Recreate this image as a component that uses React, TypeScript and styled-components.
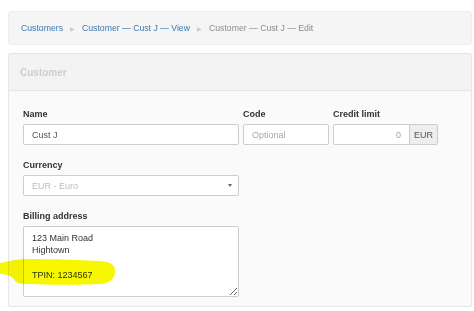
import React from 'react';
import styled, { createGlobalStyle } from 'styled-components';

const GlobalStyle = createGlobalStyle`
  html, body {
    margin: 0;
    padding: 0;
    background: #ffffff;
    font-family: 'Liberation Sans', Arial, sans-serif;
    font-size: 9px;
    color: #333333;
  }
  * {
    box-sizing: border-box;
  }
`;

const Page = styled.div`
  position: relative;
  width: 474px;
  height: 311px;
  padding: 11px 2px 0 8px;
  overflow: hidden;
`;

const Breadcrumb = styled.ol`
  display: flex;
  align-items: center;
  height: 34px;
  margin: 0 0 8px;
  padding: 0 12px;
  list-style: none;
  background: #f5f5f5;
  border: 1px solid #ececec;
  border-radius: 3px;
  font-size: 8.7px;
`;

const Crumb = styled.li<{ $active?: boolean }>`
  color: ${(p) => (p.$active ? '#8c8c8c' : '#3d78b0')};
  white-space: nowrap;
`;

const Sep = styled.span`
  margin: 0 7px;
  color: #cccccc;
  font-size: 6px;
`;

const Panel = styled.section`
  border: 1px solid #e6e6e6;
  border-radius: 2px;
  background: #fafafa;
  height: 254px;
`;

const PanelHeading = styled.div`
  display: flex;
  align-items: center;
  height: 37px;
  padding: 0 11px;
  background: #f3f3f3;
  border-bottom: 1px solid #e6e6e6;
  color: #cdcdcd;
  font-weight: bold;
  font-size: 10px;
`;

const PanelBody = styled.div`
  display: flex;
  flex-direction: column;
  gap: 15px;
  padding: 18px 14px 0;
`;

const Row = styled.div`
  display: flex;
  gap: 4px;
`;

const Field = styled.div<{ $width: number }>`
  display: flex;
  flex-direction: column;
  width: ${(p) => p.$width}px;
`;

const Label = styled.label`
  font-weight: bold;
  color: #333333;
  line-height: 11px;
  margin-bottom: 4px;
`;

const Input = styled.input<{ $right?: boolean }>`
  width: 100%;
  height: 21px;
  padding: 0 8px;
  border: 1px solid #cccccc;
  border-radius: 2px;
  background: #ffffff;
  font: inherit;
  color: #555555;
  text-align: ${(p) => (p.$right ? 'right' : 'left')};
  outline: none;
  &::placeholder {
    color: #a8a8a8;
  }
`;

const Group = styled.div`
  display: flex;
  height: 21px;
`;

const GroupInput = styled(Input)`
  flex: 1;
  border-radius: 2px 0 0 2px;
  color: #a8a8a8;
`;

const Addon = styled.span`
  display: flex;
  align-items: center;
  justify-content: center;
  width: 28px;
  border: 1px solid #cccccc;
  border-left: none;
  border-radius: 0 2px 2px 0;
  background: #eeeeee;
  color: #555555;
`;

const Select = styled.div`
  display: flex;
  align-items: center;
  justify-content: space-between;
  height: 21px;
  padding: 0 6px 0 8px;
  border: 1px solid #cccccc;
  border-radius: 2px;
  background: #ffffff;
  color: #bdbdbd;
`;

const Caret = styled.span`
  width: 0;
  height: 0;
  border-left: 2.5px solid transparent;
  border-right: 2.5px solid transparent;
  border-top: 3.5px solid #666666;
`;

const TextArea = styled.textarea`
  width: 100%;
  height: 71px;
  padding: 5px 8px;
  border: 1px solid #cccccc;
  border-radius: 2px;
  background: #ffffff;
  font: inherit;
  line-height: 12.4px;
  color: #333333;
  resize: both;
  outline: none;
`;

const Highlight = styled.svg`
  position: absolute;
  left: 0;
  top: 255px;
  pointer-events: none;
  mix-blend-mode: multiply;
`;

export default function App() {
  return (
    <>
      <GlobalStyle />
      <Page>
        <Breadcrumb>
          <Crumb>Customers</Crumb>
          <Sep>▶</Sep>
          <Crumb>Customer — Cust J — View</Crumb>
          <Sep>▶</Sep>
          <Crumb $active>Customer — Cust J — Edit</Crumb>
        </Breadcrumb>
        <Panel>
          <PanelHeading>Customer</PanelHeading>
          <PanelBody>
            <Row>
              <Field $width={216}>
                <Label>Name</Label>
                <Input defaultValue="Cust J" />
              </Field>
              <Field $width={86}>
                <Label>Code</Label>
                <Input placeholder="Optional" />
              </Field>
              <Field $width={105}>
                <Label>Credit limit</Label>
                <Group>
                  <GroupInput $right defaultValue="0" />
                  <Addon>EUR</Addon>
                </Group>
              </Field>
            </Row>
            <Row>
              <Field $width={216}>
                <Label>Currency</Label>
                <Select>
                  <span>EUR - Euro</span>
                  <Caret />
                </Select>
              </Field>
            </Row>
            <Row>
              <Field $width={216}>
                <Label>Billing address</Label>
                <TextArea defaultValue={'123 Main Road\nHightown\n\nTPIN: 1234567'} />
              </Field>
            </Row>
          </PanelBody>
        </Panel>
        <Highlight width="120" height="34" viewBox="0 0 120 34">
          <path
            d="M0 8 C10 6 18 4 30 4 C55 4 80 5 100 6 C110 7 115 9 115 16 C115 24 110 28 100 29 C80 30 50 30 30 29 C20 29 15 28 14 24 C10 20 5 19 0 19 Z"
            fill="#f7f700"
          />
        </Highlight>
      </Page>
    </>
  );
}
